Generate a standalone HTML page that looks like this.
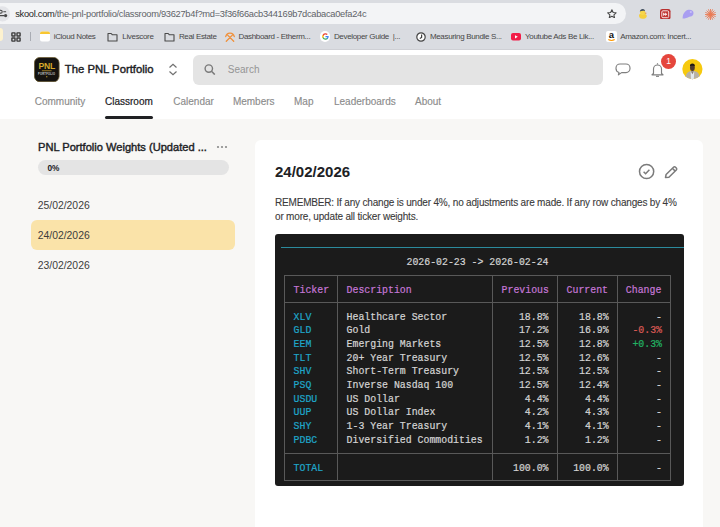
<!DOCTYPE html>
<html><head><meta charset="utf-8">
<style>
*{margin:0;padding:0;box-sizing:border-box}
html,body{width:720px;height:527px;overflow:hidden;background:#f8f7f5;font-family:"Liberation Sans",sans-serif;position:relative}
.a{position:absolute;white-space:pre}
#chrome{position:absolute;left:0;top:0;width:720px;height:50px;background:#dadce1}
#pill{position:absolute;left:-20px;top:3px;width:646px;height:21px;border-radius:10.5px;background:#f3f4f6}
#hdr{position:absolute;left:0;top:50px;width:720px;height:68.5px;background:#fff}
.bm{position:absolute;top:31.5px;font-size:8px;letter-spacing:-0.33px;color:#474747;line-height:10px}
.tab{position:absolute;top:46px;font-size:10px;letter-spacing:0px;color:#8c8c8c;line-height:12px;-webkit-text-stroke:0.15px #8c8c8c}
#card{position:absolute;left:255px;top:140px;width:448px;height:420px;background:#fff;border-radius:6px}
#term{position:absolute;left:275px;top:234px;width:409px;height:252px;background:#1b1b1b;border-radius:3px}
.m{position:absolute;font-family:"Liberation Mono",monospace;font-size:9.87px;line-height:10.8px;white-space:pre;color:#d4d4d4;transform:scaleY(1.15);transform-origin:0 0;-webkit-text-stroke:0.2px currentColor}
.cy{color:#1fa6c9}.mg{color:#c577d6}.rd{color:#dc5a55}.gr{color:#22b363}
.r{text-align:right}
</style></head><body>
<div id="chrome">
  <div id="pill"></div>
  <svg class="a" style="left:0;top:0" width="11" height="24" viewBox="0 0 11 24"><circle cx="2.4" cy="13.8" r="7.6" fill="#e3e4e8"/><circle cx="0.7" cy="11.7" r="1.5" fill="none" stroke="#474747" stroke-width="1.1"/><path d="M3.3 11.7h2.8M0 15.6h4.2" stroke="#474747" stroke-width="1.1"/><circle cx="5.6" cy="15.6" r="1.6" fill="#474747"/></svg>
  <div class="a" style="left:15.2px;top:9.2px;font-size:9.3px;line-height:11px;color:#5f6368;letter-spacing:-0.285px"><span style="color:#1f1f1f">skool.com</span>/the-pnl-portfolio/classroom/93627b4f?md=3f36f66acb344169b7dcabaca0efa24c</div>
  <!-- star -->
  <svg class="a" style="left:606.8px;top:9px" width="9.8" height="9.3" viewBox="0 0 24 22"><path d="M12 1.5l3.1 6.6 7.2.8-5.4 4.9 1.5 7.1L12 17.3l-6.4 3.6 1.5-7.1L1.7 8.9l7.2-.8z" fill="none" stroke="#474747" stroke-width="2.6" stroke-linejoin="round"/></svg>
  <!-- extensions -->
  <svg class="a" style="left:638px;top:8px" width="10" height="11" viewBox="0 0 10 11"><path d="M1 7.5C1 6 2.5 5.8 4 6.2L6.5 6C8.5 6 9.2 7.5 8.6 9 8 10.3 6.5 10.8 4.5 10.8 2.3 10.8 1 9.5 1 7.5z" fill="#f5cf3d"/><circle cx="4.6" cy="4.2" r="2.6" fill="#f7d64a"/><path d="M1.8 3.6C2 1.6 3.5.8 4.8.9 6.3 1 7.1 2.2 7 3.2 5.5 2.6 3.5 2.8 1.8 3.6z" fill="#3f4f66"/><path d="M6.8 4.4l2.2.6-2 .9z" fill="#f0902a"/></svg>
  <svg class="a" style="left:660px;top:8.5px" width="10.5" height="10.5" viewBox="0 0 10.5 10.5"><rect x="0" y="0" width="10.5" height="10.5" rx="2.2" fill="#b9302f"/><rect x="1.8" y="1.8" width="6.9" height="6.9" rx="1.2" fill="#c23a36" stroke="#f4dede" stroke-width="1"/><path d="M3.2 3.4l2 1.85-2 1.85zM5.2 3.4l2 1.85-2 1.85z" fill="#fff"/></svg>
  <svg class="a" style="left:681.5px;top:9.2px" width="12" height="10" viewBox="0 0 12 10"><path d="M.6 9.4C.6 6.5 1.5 3.8 3.5 2.2 5.5.6 8.8.4 10.5 1.8 11.9 3 11.8 5.3 10.6 6.6 9.4 7.9 7.8 7.7 6.3 8.3 4.6 9 2.2 9.9.6 9.4z" fill="#a99ef1"/><path d="M7.9 3h1.8" stroke="#e6e2ff" stroke-width=".9"/></svg>
  <svg class="a" style="left:704.5px;top:8.5px" width="11" height="11" viewBox="0 0 11 11"><g stroke="#ea7b55" stroke-width=".9"><path d="M5.5 0v11M0 5.5h11M1.6 1.6l7.8 7.8M9.4 1.6L1.6 9.4M3.4.3l4.2 10.4M.3 3.4l10.4 4.2M7.6.3L3.4 10.7M10.7 3.4L.3 7.6"/></g><circle cx="5.5" cy="5.5" r="1.8" fill="#ea7b55"/></svg>
  <!-- bookmarks -->
  <div class="a" style="left:-4px;top:28px;width:7px;height:13px;border-radius:3px;background:#fdf2cf"></div>
  <div class="a" style="left:0;top:49px;width:720px;height:1px;background:#cfd0d5"></div>
  <svg class="a" style="left:11px;top:32px" width="10" height="10" viewBox="0 0 10 10"><g fill="none" stroke="#3c3c3c" stroke-width="1.4"><rect x="0.9" y="0.9" width="3.1" height="3.1" rx=".3"/><rect x="6" y="0.9" width="3.1" height="3.1" rx=".3"/><rect x="0.9" y="6" width="3.1" height="3.1" rx=".3"/><rect x="6" y="6" width="3.1" height="3.1" rx=".3"/></g></svg>
  <div class="a" style="left:30px;top:32px;width:1px;height:9px;background:#a9acb3"></div>
  <svg class="a" style="left:40px;top:31px" width="10" height="11" viewBox="0 0 10 11"><rect x="0" y="0.5" width="10" height="10" rx="2" fill="#fff"/><path d="M0 3V2.5A2 2 0 0 1 2 .5h6a2 2 0 0 1 2 2V3z" fill="#f8c630"/></svg>
  <div class="bm" style="left:53.7px">iCloud Notes</div>
  <svg class="a" style="left:106.5px;top:32px" width="11" height="10" viewBox="0 0 11 10"><path d="M1 1.5h3.2l1 1.2H10v6.3H1z" fill="none" stroke="#4a4a4a" stroke-width="1.1" stroke-linejoin="round"/></svg>
  <div class="bm" style="left:122.3px">Livescore</div>
  <svg class="a" style="left:163.5px;top:32px" width="11" height="10" viewBox="0 0 11 10"><path d="M1 1.5h3.2l1 1.2H10v6.3H1z" fill="none" stroke="#4a4a4a" stroke-width="1.1" stroke-linejoin="round"/></svg>
  <div class="bm" style="left:178.9px">Real Estate</div>
  <svg class="a" style="left:224.5px;top:31.5px" width="10" height="10" viewBox="0 0 10 10"><g stroke="#f0903a" stroke-width="1.3" fill="none" stroke-linecap="round"><path d="M1.3 9.2L7.6 2.9M8.7 9.2L2.4 2.9"/><path d="M5.3 1.2Q8.3 1.2 9.3 4.6M4.7 1.2Q1.7 1.2.7 4.6"/></g></svg>
  <div class="bm" style="left:238.5px">Dashboard - Etherm...</div>
  <div class="a" style="left:319.8px;top:31.2px;width:10.6px;height:10.6px;border-radius:50%;background:#fff"></div>
  <svg class="a" style="left:321.6px;top:33px" width="7" height="7" viewBox="0 0 24 24"><path d="M23 12.3c0-.8-.1-1.6-.2-2.3H12v4.4h6.2a5.3 5.3 0 0 1-2.3 3.4v2.8h3.7c2.2-2 3.4-5 3.4-8.3z" fill="#4285f4"/><path d="M12 23.5c3.1 0 5.7-1 7.6-2.8l-3.7-2.8c-1 .7-2.3 1.1-3.9 1.1-3 0-5.5-2-6.4-4.7H1.8v2.9A11.5 11.5 0 0 0 12 23.5z" fill="#34a853"/><path d="M5.6 14.3a6.9 6.9 0 0 1 0-4.4V7H1.8a11.5 11.5 0 0 0 0 10.3z" fill="#fbbc05"/><path d="M12 5c1.7 0 3.2.6 4.4 1.7l3.3-3.3A11.5 11.5 0 0 0 1.8 7l3.8 2.9C6.5 7.1 9 5 12 5z" fill="#ea4335"/></svg>
  <div class="bm" style="left:333.9px">Developer Guide &nbsp;|...</div>
  <svg class="a" style="left:415.5px;top:31.5px" width="10" height="10" viewBox="0 0 10 10"><circle cx="5" cy="5" r="4.2" fill="#fff" stroke="#444" stroke-width="1.2"/><path d="M5.6 2.6v2.8L3.8 6.6" fill="none" stroke="#3f3f3f" stroke-width="1.2"/></svg>
  <div class="bm" style="left:429.9px">Measuring Bundle S...</div>
  <svg class="a" style="left:511px;top:33px" width="10" height="8" viewBox="0 0 10 8"><rect x="0" y="0" width="10" height="7.5" rx="2" fill="#f21d48"/><path d="M4 2.2v3.2l2.8-1.6z" fill="#fff"/></svg>
  <div class="bm" style="left:525px">Youtube Ads Be Lik...</div>
  <svg class="a" style="left:606px;top:30.5px" width="11" height="11" viewBox="0 0 11 11"><rect x="0" y="0" width="11" height="11" rx="2" fill="#fff"/><text x="5.5" y="7.2" font-family="Liberation Sans" font-weight="bold" font-size="9.5" text-anchor="middle" fill="#111">a</text><path d="M2.3 8.6q3.2 1.7 6.4 0" stroke="#f90" stroke-width="1.1" fill="none"/></svg>
  <div class="bm" style="left:620.2px">Amazon.com: Incert...</div>
</div>

<div id="hdr">
  <!-- logo -->
  <svg class="a" style="left:34px;top:6.8px" width="25.5" height="25.2" viewBox="0 0 25.5 25.2"><rect x="0.4" y="0.4" width="24.7" height="24.4" rx="5.5" fill="#151310" stroke="#6b5a2e" stroke-width="0.8"/><text x="12.7" y="12.3" font-family="Liberation Sans" font-weight="bold" font-size="8.6" text-anchor="middle" fill="#d6aa2c" letter-spacing="-0.2">PNL</text><rect x="7.9" y="13.4" width="9.7" height="0.8" fill="#b8922e"/><text x="12.7" y="17.7" font-family="Liberation Sans" font-weight="bold" font-size="2.6" text-anchor="middle" fill="#cfcfcf" letter-spacing="0.25">PORTFOLIO</text><rect x="12.2" y="19.2" width="1.1" height="1.1" fill="#d6aa2c"/></svg>
  <div class="a" style="left:64.8px;top:12px;font-size:11.3px;line-height:14px;color:#202124;-webkit-text-stroke:0.4px #202124">The PNL Portfolio</div>
  <svg class="a" style="left:168px;top:13px" width="10" height="13" viewBox="0 0 10 13"><path d="M1.5 4.5L5 1.2l3.5 3.3M1.5 8.5L5 11.8l3.5-3.3" fill="none" stroke="#707070" stroke-width="1.2"/></svg>
  <div class="a" style="left:193px;top:5px;width:410px;height:29.5px;border-radius:6px;background:#e4e4e4"></div>
  <svg class="a" style="left:204px;top:14px" width="13" height="11" viewBox="0 0 13 11"><circle cx="4.8" cy="4.6" r="3.7" fill="none" stroke="#7a7a7a" stroke-width="1.4"/><path d="M7.5 7.3l3.3 3.3" stroke="#7a7a7a" stroke-width="1.5"/></svg>
  <div class="a" style="left:227.8px;top:13.5px;font-size:10px;line-height:12px;color:#959595">Search</div>
  <!-- chat -->
  <svg class="a" style="left:615px;top:12.5px" width="16" height="13" viewBox="0 0 16 13"><path d="M5 1h6a4 4 0 0 1 4 4v.6a4 4 0 0 1-4 4H6.6L3.4 11.8l.6-2.3A4 4 0 0 1 1 5.6V5a4 4 0 0 1 4-4z" fill="none" stroke="#7f7f7f" stroke-width="1.15" stroke-linejoin="round"/></svg>
  <!-- bell -->
  <svg class="a" style="left:651px;top:11.5px" width="13" height="16" viewBox="0 0 13 16"><path d="M6.5 1.2v1M2.5 11.5V7a4 4 0 0 1 8 0v4.5l1.5 1.3H1z" fill="none" stroke="#7f7f7f" stroke-width="1.15" stroke-linejoin="round"/><path d="M5 14.3h3" stroke="#7f7f7f" stroke-width="1.15"/></svg>
  <div class="a" style="left:661px;top:3.5px;width:15px;height:15px;border-radius:50%;background:#e5463d;color:#fff;font-size:8.5px;line-height:15px;text-align:center">1</div>
  <!-- avatar -->
  <svg class="a" style="left:682px;top:9px" width="21" height="21" viewBox="0 0 21 21"><defs><clipPath id="av"><circle cx="10.4" cy="10.1" r="10.1"/></clipPath></defs><circle cx="10.4" cy="10.1" r="10.1" fill="#f6c90e"/><g clip-path="url(#av)"><path d="M3.2 21c.3-4 1-7.2 3.5-8.3l3-.9h1.8l3 .9c2.5 1 3.2 4.2 3.5 8.3z" fill="#b7b1a5"/><path d="M8.6 12.2h3.6l-.4 8.8h-2.8z" fill="#e3e9ee"/><path d="M8.8 12.3l1.6 3 1.6-3" fill="#8a7c6c"/><ellipse cx="10.4" cy="8.4" rx="2.4" ry="3.5" fill="#4e3a2e"/><path d="M7.9 7.3C7.9 5.3 9 4.6 10.4 4.6S12.9 5.3 12.9 7.3C12 6.5 8.8 6.5 7.9 7.3z" fill="#1e1814"/></g></svg>
  <!-- tabs -->
  <div class="tab" style="left:34.7px">Community</div>
  <div class="tab" style="left:105px;color:#202124;-webkit-text-stroke:0.2px #202124">Classroom</div>
  <div class="a" style="left:105px;top:66px;width:48px;height:3px;border-radius:1.5px;background:#202124"></div>
  <div class="tab" style="left:173.3px">Calendar</div>
  <div class="tab" style="left:232.9px">Members</div>
  <div class="tab" style="left:294px">Map</div>
  <div class="tab" style="left:334px">Leaderboards</div>
  <div class="tab" style="left:415px">About</div>
</div>

<!-- sidebar -->
<div class="a" style="left:38px;top:140px;font-size:11.1px;line-height:14px;color:#202124;-webkit-text-stroke:0.4px #202124">PNL Portfolio Weights (Updated ...</div>
<svg class="a" style="left:216px;top:145px" width="12" height="4" viewBox="0 0 12 4"><circle cx="2" cy="2" r="1.1" fill="#8a8a8a"/><circle cx="6" cy="2" r="1.1" fill="#8a8a8a"/><circle cx="10" cy="2" r="1.1" fill="#8a8a8a"/></svg>
<div class="a" style="left:37.5px;top:160px;width:191px;height:15px;border-radius:7.5px;background:#e4e4e4"></div>
<div class="a" style="left:47.5px;top:162.5px;font-size:8.3px;line-height:10px;color:#202124;font-weight:bold">0%</div>
<div class="a" style="left:31px;top:220px;width:203.7px;height:29.5px;border-radius:6px;background:#fae3a9"></div>
<div class="a" style="left:37.7px;top:199.8px;font-size:10.4px;line-height:12px;color:#3c3c3c">25/02/2026</div>
<div class="a" style="left:37.7px;top:229.8px;font-size:10.4px;line-height:12px;color:#3c3c3c">24/02/2026</div>
<div class="a" style="left:37.7px;top:259.8px;font-size:10.4px;line-height:12px;color:#3c3c3c">23/02/2026</div>

<!-- card -->
<div id="card"></div>
<div class="a" style="left:275px;top:164px;font-size:15px;line-height:16px;color:#202124;font-weight:bold">24/02/2026</div>
<svg class="a" style="left:638px;top:163px" width="17" height="17" viewBox="0 0 17 17"><circle cx="8.6" cy="8.5" r="7.1" fill="none" stroke="#7b7b7b" stroke-width="1.5"/><path d="M5.6 8.8l2 2 3.8-4" fill="none" stroke="#7b7b7b" stroke-width="1.5"/></svg>
<svg class="a" style="left:664px;top:165px" width="15" height="14" viewBox="0 0 15 14"><path d="M1.5 12.5l.6-3L9.5 2.2a1.4 1.4 0 0 1 2 0l.8.8a1.4 1.4 0 0 1 0 2L4.9 12.3z M8.4 3.3l2.8 2.8" fill="none" stroke="#7b7b7b" stroke-width="1.5" stroke-linejoin="round"/></svg>
<div class="a" style="left:275px;top:195.5px;font-size:10px;letter-spacing:-0.183px;line-height:14.6px;color:#3a3a3a;-webkit-text-stroke:0.1px #3a3a3a">REMEMBER: If any change is under 4%, no adjustments are made. If any row changes by 4%
or more, update all ticker weights.</div>

<!-- terminal -->
<div id="term"></div>
<div class="a" style="left:281px;top:246.5px;width:403px;height:1.6px;background:#2b8a9c"></div>
<div class="m" style="left:406.5px;top:256.5px">2026-02-23 -&gt; 2026-02-24</div>
<!-- table borders -->
<div class="a" style="left:284px;top:275px;width:387px;height:206px;border:1px solid #595959"></div>
<div class="a" style="left:284px;top:302px;width:387px;height:1px;background:#595959"></div>
<div class="a" style="left:284px;top:453px;width:387px;height:1px;background:#595959"></div>
<div class="a" style="left:337px;top:275px;width:1px;height:206px;background:#595959"></div>
<div class="a" style="left:492px;top:275px;width:1px;height:206px;background:#595959"></div>
<div class="a" style="left:557px;top:275px;width:1px;height:206px;background:#595959"></div>
<div class="a" style="left:617px;top:275px;width:1px;height:206px;background:#595959"></div>
<!-- header -->
<div class="m mg" style="left:293.6px;top:284.5px">Ticker</div>
<div class="m mg" style="left:346.6px;top:284.5px">Description</div>
<div class="m mg" style="left:501.6px;top:284.5px">Previous</div>
<div class="m mg" style="left:566.6px;top:284.5px">Current</div>
<div class="m mg" style="left:625.8px;top:284.5px">Change</div>
<!-- rows -->
<div class="m cy" style="left:293.6px;top:311.50px">XLV</div>
<div class="m" style="left:346.6px;top:311.50px">Healthcare Sector</div>
<div class="m r" style="left:448.5px;width:100px;top:311.50px">18.8%</div>
<div class="m r" style="left:508.7px;width:100px;top:311.50px">18.8%</div>
<div class="m r" style="left:562px;width:100px;top:311.50px">-</div>
<div class="m cy" style="left:293.6px;top:325.20px">GLD</div>
<div class="m" style="left:346.6px;top:325.20px">Gold</div>
<div class="m r" style="left:448.5px;width:100px;top:325.20px">17.2%</div>
<div class="m r" style="left:508.7px;width:100px;top:325.20px">16.9%</div>
<div class="m r" style="left:562px;width:100px;top:325.20px"><span class="rd">-0.3%</span></div>
<div class="m cy" style="left:293.6px;top:338.90px">EEM</div>
<div class="m" style="left:346.6px;top:338.90px">Emerging Markets</div>
<div class="m r" style="left:448.5px;width:100px;top:338.90px">12.5%</div>
<div class="m r" style="left:508.7px;width:100px;top:338.90px">12.8%</div>
<div class="m r" style="left:562px;width:100px;top:338.90px"><span class="gr">+0.3%</span></div>
<div class="m cy" style="left:293.6px;top:352.60px">TLT</div>
<div class="m" style="left:346.6px;top:352.60px">20+ Year Treasury</div>
<div class="m r" style="left:448.5px;width:100px;top:352.60px">12.5%</div>
<div class="m r" style="left:508.7px;width:100px;top:352.60px">12.6%</div>
<div class="m r" style="left:562px;width:100px;top:352.60px">-</div>
<div class="m cy" style="left:293.6px;top:366.30px">SHV</div>
<div class="m" style="left:346.6px;top:366.30px">Short-Term Treasury</div>
<div class="m r" style="left:448.5px;width:100px;top:366.30px">12.5%</div>
<div class="m r" style="left:508.7px;width:100px;top:366.30px">12.5%</div>
<div class="m r" style="left:562px;width:100px;top:366.30px">-</div>
<div class="m cy" style="left:293.6px;top:380.00px">PSQ</div>
<div class="m" style="left:346.6px;top:380.00px">Inverse Nasdaq 100</div>
<div class="m r" style="left:448.5px;width:100px;top:380.00px">12.5%</div>
<div class="m r" style="left:508.7px;width:100px;top:380.00px">12.4%</div>
<div class="m r" style="left:562px;width:100px;top:380.00px">-</div>
<div class="m cy" style="left:293.6px;top:393.70px">USDU</div>
<div class="m" style="left:346.6px;top:393.70px">US Dollar</div>
<div class="m r" style="left:448.5px;width:100px;top:393.70px">4.4%</div>
<div class="m r" style="left:508.7px;width:100px;top:393.70px">4.4%</div>
<div class="m r" style="left:562px;width:100px;top:393.70px">-</div>
<div class="m cy" style="left:293.6px;top:407.40px">UUP</div>
<div class="m" style="left:346.6px;top:407.40px">US Dollar Index</div>
<div class="m r" style="left:448.5px;width:100px;top:407.40px">4.2%</div>
<div class="m r" style="left:508.7px;width:100px;top:407.40px">4.3%</div>
<div class="m r" style="left:562px;width:100px;top:407.40px">-</div>
<div class="m cy" style="left:293.6px;top:421.10px">SHY</div>
<div class="m" style="left:346.6px;top:421.10px">1-3 Year Treasury</div>
<div class="m r" style="left:448.5px;width:100px;top:421.10px">4.1%</div>
<div class="m r" style="left:508.7px;width:100px;top:421.10px">4.1%</div>
<div class="m r" style="left:562px;width:100px;top:421.10px">-</div>
<div class="m cy" style="left:293.6px;top:434.80px">PDBC</div>
<div class="m" style="left:346.6px;top:434.80px">Diversified Commodities</div>
<div class="m r" style="left:448.5px;width:100px;top:434.80px">1.2%</div>
<div class="m r" style="left:508.7px;width:100px;top:434.80px">1.2%</div>
<div class="m r" style="left:562px;width:100px;top:434.80px">-</div>
<div class="m cy" style="left:293.6px;top:462.6px">TOTAL</div>
<div class="m r" style="left:448.5px;width:100px;top:462.6px">100.0%</div>
<div class="m r" style="left:508.7px;width:100px;top:462.6px">100.0%</div>
<div class="m r" style="left:562px;width:100px;top:462.6px">-</div>
</body></html>
